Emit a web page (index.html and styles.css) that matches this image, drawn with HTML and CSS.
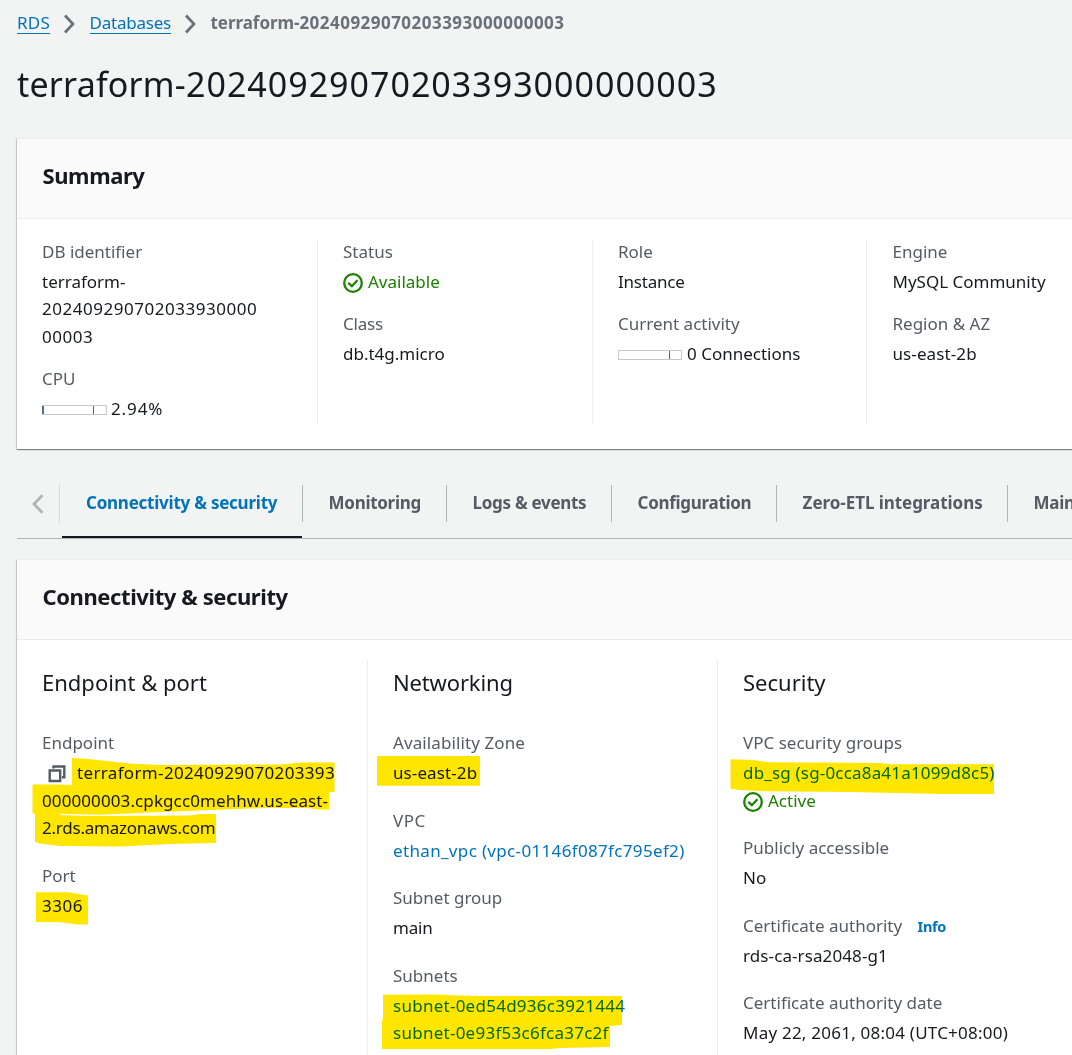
FILE: index.html
```html
<!DOCTYPE html>
<html lang="en">
<head>
<meta charset="utf-8">
<title>RDS - Database details</title>
<link rel="stylesheet" href="styles.css">
</head>
<body>
<main class="page">
  <nav class="crumbs">
    <a class="crumb-link t-hash" href="#">RDS</a>
    <svg class="chevron" viewBox="0 0 12 20"><path d="M2 1.5 10 10 2 18.5"/></svg>
    <a class="crumb-link t-tight" href="#">Databases</a>
    <svg class="chevron" viewBox="0 0 12 20"><path d="M2 1.5 10 10 2 18.5"/></svg>
    <span class="crumb-current">terraform-<span class="crumb-digits">20240929070203393000000003</span></span>
  </nav>
  <h1 class="title">terraform-<span class="title-digits">20240929070203393000000003</span></h1>

  <section class="panel">
    <header class="panel-head"><h2 class="panel-title">Summary</h2></header>
    <div class="summary-grid">
      <div class="col">
        <div class="label">DB identifier</div>
        <div class="value">terraform-<br><span class="t-digits">202409290702033930000<br>00003</span></div>
        <div class="label">CPU</div>
        <div class="value with-icon"><span class="meter"><i class="meter-fill" style="width:3%"></i><i class="meter-limit"></i></span><span class="t-percent">2.94%</span></div>
      </div>
      <div class="col">
        <div class="label">Status</div>
        <div class="value with-icon ok"><svg class="check" viewBox="0 0 20 20"><circle cx="10" cy="10" r="8.8"/><path d="m5.3 9.8 3.6 3.4 5.5-6"/></svg><span>Available</span></div>
        <div class="label t-tight">Class</div>
        <div class="value">db.t4g.micro</div>
      </div>
      <div class="col">
        <div class="label">Role</div>
        <div class="value t-tight">Instance</div>
        <div class="label">Current activity</div>
        <div class="value with-icon"><span class="meter meter-short"><i class="meter-limit"></i></span><span>0 Connections</span></div>
      </div>
      <div class="col">
        <div class="label">Engine</div>
        <div class="value">MySQL Community</div>
        <div class="label">Region &amp; AZ</div>
        <div class="value t-host">us-east-2b</div>
      </div>
    </div>
  </section>

  <nav class="tabs">
    <div class="tab-scroll"><svg class="back" viewBox="0 0 12 20"><path d="M10.500 1.200 2 10l8.500 8.800"/></svg></div>
    <div class="tab active"><span>Connectivity &amp; security</span></div>
    <div class="tab tab-monitoring"><span>Monitoring</span></div>
    <div class="tab tab-logs"><span>Logs &amp; events</span></div>
    <div class="tab tab-config"><span>Configuration</span></div>
    <div class="tab tab-etl"><span>Zero-ETL integrations</span></div>
    <div class="tab tab-maint"><span>Maintenance &amp; backups</span></div>
  </nav>

  <section class="panel">
    <header class="panel-head"><h2 class="panel-title">Connectivity &amp; security</h2></header>
    <div class="detail-grid">
      <div class="col">
        <h3 class="group-title">Endpoint &amp; port</h3>
        <div class="label">Endpoint</div>
        <div class="value">
          <div class="with-icon"><svg class="copy" viewBox="0 0 18 18"><path d="M1.700 5.500h10.500v10.500h-10.500z"/><path d="M5.500 3.500V1.500h10.800v10.800h-2.300"/></svg><span class="t-endpoint">terraform-20240929070203393</span></div>
          <div class="t-host">000000003.cpkgcc0mehhw.us-east-</div>
          <div class="t-tight">2.rds.amazonaws.com</div>
        </div>
        <div class="label">Port</div>
        <div class="value t-digits">3306</div>
      </div>
      <div class="col">
        <h3 class="group-title t-networking">Networking</h3>
        <div class="label t-host">Availability Zone</div>
        <div class="value t-host">us-east-2b</div>
        <div class="label t-wide">VPC</div>
        <div class="value"><a class="link t-endpoint" href="#">ethan_vpc (vpc-01146f087fc795ef2)</a></div>
        <div class="label">Subnet group</div>
        <div class="value t-tight">main</div>
        <div class="label">Subnets</div>
        <div class="value t-hash"><a class="link" href="#">subnet-0ed54d936c3921444</a><br><a class="link" href="#">subnet-0e93f53c6fca37c2f</a></div>
      </div>
      <div class="col">
        <h3 class="group-title">Security</h3>
        <div class="label">VPC security groups</div>
        <div class="value"><a class="link t-sg" href="#">db_sg (sg-0cca8a41a1099d8c5)</a>
          <div class="with-icon ok"><svg class="check" viewBox="0 0 20 20"><circle cx="10" cy="10" r="8.8"/><path d="m5.300 9.800 3.600 3.400 5.500-6"/></svg><span>Active</span></div>
        </div>
        <div class="label">Publicly accessible</div>
        <div class="value">No</div>
        <div class="label">Certificate authority <a class="info" href="#">Info</a></div>
        <div class="value t-host">rds-ca-rsa2048-g1</div>
        <div class="label">Certificate authority date</div>
        <div class="value t-date">May 22, 2061, 08:04 (UTC+08:00)</div>
      </div>
    </div>
  </section>

  <svg class="marker" viewBox="0 0 1072 1055">
    <path d="M72 758 84 758.500 130 763.500 160 765 280 764.500 300 762.500H334.500V792H329V809.500H318L308 808H265L160 812 100 814.800 60 813.700V815L90 816 190 815.500 200 814H216V843L170 844 120 846.500 60 846 40 843.500 35 842V814.500L32.500 813V784.500H60L72 785Z"/>
    <path d="M36 892.300H68L88 895.500V924.500H78L60 922.300 36 922Z"/>
    <path d="M377 756H480V785.700H377Z"/>
    <path d="M383 994.700 433 994.500 475 996H622V1025L610 1026V1047L560 1048 550 1049H382V1020L383 1019Z"/>
    <path d="M730.500 759.300 752 760 770 762.300 880 763 890 764.300H994V794H943L850 792 765 791.300 740 790 730.500 788.700Z"/>
  </svg>
</main>
</body>
</html>
```
FILE: styles.css
```css
* { box-sizing: border-box; }
html { background: #f2f3f3; }
body {
  margin: 0;
  overflow: hidden;
  height: 1055px;
  font-family: "Noto Sans", "Open Sans", sans-serif;
  font-size: 17px;
  line-height: 27.5px;
  color: #16191f;
  background: #f2f3f3;
}
a { text-decoration: none; }
svg { display: block; flex: none; fill: none; }
.page { position: relative; height: 1055px; padding: 9px 0 0 17px; overflow: hidden; }

.crumbs { display: flex; height: 27.5px; white-space: nowrap; }
.crumb-link { height: 25px; color: #0073bb; border-bottom: 1px solid #0073bb; }
.crumb-current { font-weight: 700; color: #687078; letter-spacing: -.05px; }
.crumb-digits { letter-spacing: .47px; }
.chevron { width: 12px; height: 20px; margin: 5px 14.5px 0 13px; stroke: #687078; stroke-width: 2.7; }

.title { margin: 25.5px 0 31px; font-size: 34px; font-weight: 400; line-height: 45px; letter-spacing: .2px; white-space: nowrap; }
.title-digits { letter-spacing: 1px; }

.panel {
  width: 1124px;
  background: #fff;
  border-top: 1px solid #eaeded;
  box-shadow: 0 1px 1px rgba(0,28,36,.3), 1px 1px 1px rgba(0,28,36,.15), -1px 1px 1px rgba(0,28,36,.15);
}
.panel-head { height: 80px; padding: 21px 25px 0 25.5px; background: #fafafa; border-bottom: 1px solid #eaeded; }
.panel-title { margin: 0; font-size: 22px; line-height: 30px; font-weight: 700; letter-spacing: -.41px; }

.summary-grid { display: grid; grid-template-columns: 275px 275px 274px 275px; padding: 20px 0 25px 25px; }
.summary-grid .col { min-height: 185px; }
.summary-grid .col:last-child { padding-left: 25.5px; }
.detail-grid { display: grid; grid-template-columns: 325px 350px 400px; height: 450px; padding: 20px 0 20px 25px; }
.col { white-space: nowrap; }
.col + .col { padding-left: 25px; border-left: 1px solid #eaeded; }
.label { line-height: 26px; margin-bottom: 2.8px; color: #545b64; }
.value + .label { margin-top: 15.5px; }
.detail-grid .label { margin-bottom: 3px; }
.detail-grid .value + .label { margin-top: 21px; }
.group-title { margin: 0 0 33.4px; padding-top: 7px; font-size: 22px; line-height: 30px; font-weight: 400; }

.with-icon { display: flex; align-items: center; }
.ok { color: #1d8102; }
.check { width: 20px; height: 20px; margin: 2px 5px 0 0; stroke: currentColor; stroke-width: 2.3; }
.copy { width: 18px; height: 18px; margin: 2px 11px 0 6px; stroke: #545b64; stroke-width: 2.4; }
.meter { display: flex; justify-content: space-between; width: 65px; height: 10px; margin: 3px 4px 0 0; border: 1px solid #c8c8c8; }
.meter-short { width: 64px; margin-right: 5px; }
.meter-fill { margin-left: -1px; background: #4a6f94; }
.meter-limit { width: 1px; margin: 0 12px 0 auto; background: #d13438; }
.meter-short .meter-limit { margin-right: 11px; }
.link { color: #0073bb; }
.info { margin-left: 11px; color: #0073bb; font-size: 14.5px; font-weight: 700; letter-spacing: -.3px; }

.tabs { display: flex; width: 1124px; height: 55px; margin-top: 35px; border-bottom: 1px solid #aab7b8; font-weight: 700; color: #545b64; white-space: nowrap; letter-spacing: -.3px; }
.tab-scroll { flex: none; width: 43px; height: 39px; border-right: 1px solid #d5dbdb; }
.back { width: 12px; height: 20px; margin: 10px 0 0 15px; stroke: #aab7b8; stroke-width: 2.7; }
.tab { flex: none; height: 37px; margin-top: 1px; padding: 4px 25px 0 25.6px; border-left: 1px solid #aab7b8; }
.tab.active { position: relative; width: 240px; margin-left: 2px; padding-left: 24px; border-left: 0; color: #0073bb; letter-spacing: -.24px; }
.tab.active::after { content: ""; position: absolute; left: 0; right: 0; top: 51px; height: 2px; background: #16191f; }
.tab-monitoring { width: 144px; }
.tab-logs { width: 165px; }
.tab-config { width: 165px; }
.tab-etl { width: 231px; letter-spacing: -.05px; }
.tabs + .panel { margin-top: 20px; }

/* tracking for identifiers and labels */
.t-digits { letter-spacing: .53px; }
.t-percent { letter-spacing: .9px; }
.t-wide { letter-spacing: .5px; }
.t-tight { letter-spacing: -.23px; }
.t-endpoint { letter-spacing: .34px; }
.t-hash { letter-spacing: .26px; }
.t-date { letter-spacing: .23px; }
.t-sg { letter-spacing: .18px; }
.t-host { letter-spacing: .1px; }
.t-networking { letter-spacing: -.15px; }

/* highlighter strokes lying over the values */
.marker { position: absolute; left: 0; top: 0; width: 1072px; height: 1055px; mix-blend-mode: multiply; pointer-events: none; }
.marker path { fill: #ffe600; }
```
